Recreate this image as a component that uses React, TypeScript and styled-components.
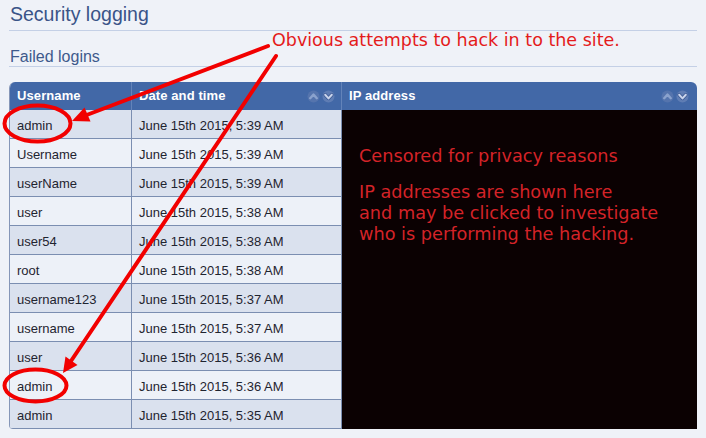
import React from "react";
import styled, { createGlobalStyle } from "styled-components";

const Global = createGlobalStyle`
  html, body { margin: 0; padding: 0; background: #eff2f8; }
  * { box-sizing: border-box; }
`;

const Page = styled.div`
  position: relative;
  width: 706px;
  height: 438px;
  overflow: hidden;
  padding: 0 9px;
  background: #eff2f8;
  font-family: "Liberation Sans", Arial, sans-serif;
`;

const Title = styled.h1`
  margin: 0;
  padding: 2px 0 4px 1px;
  font-size: 19.5px;
  line-height: 24px;
  font-weight: normal;
  color: #3a5488;
  border-bottom: 1px solid #c4d0e6;
`;

const SubTitle = styled.h2`
  margin: 16px 0 0;
  padding: 0 0 0 1px;
  font-size: 16px;
  line-height: 19px;
  font-weight: normal;
  color: #3e5a8c;
  border-bottom: 1px solid #c4d0e6;
`;

const Table = styled.div`
  margin-top: 15px;
  width: 688px;
  border-left: 1px solid #8596b8;
  border-radius: 6px 6px 0 4px;
  overflow: hidden;
`;

const HeaderRow = styled.div`
  display: grid;
  grid-template-columns: 122px 210px 1fr;
  height: 28px;
  background: #4268a7;
`;

const HeaderCell = styled.div<{ $last?: boolean }>`
  display: flex;
  align-items: center;
  justify-content: space-between;
  padding: 0 ${(p) => (p.$last ? "8px" : "6px")} 0 7px;
  border-right: ${(p) => (p.$last ? "none" : "1px solid #6383b9")};
  color: #ffffff;
  font-size: 13px;
  font-weight: bold;
  line-height: 28px;
  letter-spacing: 0.1px;
`;

const SortIcons = styled.span`
  display: flex;
  gap: 2px;
  align-items: center;
`;

const Body = styled.div`
  display: flex;
`;

const RowsColumn = styled.div`
  width: 332px;
  display: flex;
  flex-direction: column;
`;

const Row = styled.div<{ $odd: boolean }>`
  display: grid;
  grid-template-columns: 122px 210px;
  height: 29px;
  background: ${(p) => (p.$odd ? "#dae1ee" : "#edf1f8")};
  border-bottom: 1px solid #7b8eb1;
`;

const Cell = styled.div`
  padding: 3px 0 0 7px;
  line-height: 25px;
  font-size: 13px;
  color: #1f2430;
  border-right: 1px solid #7b8eb1;
  white-space: nowrap;
`;

const Censored = styled.div`
  flex: 1;
  background: #0b0102;
  padding: 36px 18px 0 17px;
  font-family: "DejaVu Sans", Verdana, sans-serif;
  font-size: 17.7px;
  line-height: 21px;
  color: #d42328;
  white-space: nowrap;
`;

const CensorPara = styled.p`
  margin: 0 0 15px;
`;

const Annotation = styled.div`
  position: absolute;
  left: 272px;
  top: 30px;
  font-family: "DejaVu Sans", Verdana, sans-serif;
  font-size: 17.5px;
  line-height: 21px;
  color: #e41b1b;
  white-space: nowrap;
  z-index: 2;
`;

const Overlay = styled.svg`
  position: absolute;
  left: 0;
  top: 0;
  pointer-events: none;
  z-index: 3;
`;

const SortUp = () => (
  <svg width="13" height="13" viewBox="0 0 13 13">
    <circle cx="6.5" cy="6.5" r="6" fill="#5574ad" />
    <path d="M3.2 8.2 L6.5 4.6 L9.8 8.2" fill="none" stroke="#8aa2cd" strokeWidth="2.4" strokeLinecap="round" strokeLinejoin="round" />
  </svg>
);

const SortDown = () => (
  <svg width="13" height="13" viewBox="0 0 13 13">
    <circle cx="6.5" cy="6.5" r="6" fill="#5f7db4" />
    <path d="M3.2 4.8 L6.5 8.4 L9.8 4.8" fill="none" stroke="#3d5a93" strokeWidth="3.6" strokeLinecap="round" strokeLinejoin="round" />
    <path d="M3.2 4.8 L6.5 8.4 L9.8 4.8" fill="none" stroke="#c9d4ec" strokeWidth="2" strokeLinecap="round" strokeLinejoin="round" />
  </svg>
);

const rows: [string, string][] = [
  ["admin", "June 15th 2015, 5:39 AM"],
  ["Username", "June 15th 2015, 5:39 AM"],
  ["userName", "June 15th 2015, 5:39 AM"],
  ["user", "June 15th 2015, 5:38 AM"],
  ["user54", "June 15th 2015, 5:38 AM"],
  ["root", "June 15th 2015, 5:38 AM"],
  ["username123", "June 15th 2015, 5:37 AM"],
  ["username", "June 15th 2015, 5:37 AM"],
  ["user", "June 15th 2015, 5:36 AM"],
  ["admin", "June 15th 2015, 5:36 AM"],
  ["admin", "June 15th 2015, 5:35 AM"],
];

export default function App() {
  return (
    <>
      <Global />
      <Page>
        <Title>Security logging</Title>
        <SubTitle>Failed logins</SubTitle>
        <Table>
          <HeaderRow>
            <HeaderCell>Username</HeaderCell>
            <HeaderCell>
              Date and time
              <SortIcons>
                <SortUp />
                <SortDown />
              </SortIcons>
            </HeaderCell>
            <HeaderCell $last>
              IP address
              <SortIcons>
                <SortUp />
                <SortDown />
              </SortIcons>
            </HeaderCell>
          </HeaderRow>
          <Body>
            <RowsColumn>
              {rows.map(([u, d], i) => (
                <Row key={i} $odd={i % 2 === 0}>
                  <Cell>{u}</Cell>
                  <Cell>{d}</Cell>
                </Row>
              ))}
            </RowsColumn>
            <Censored>
              <CensorPara>Censored for privacy reasons</CensorPara>
              <CensorPara>
                IP addresses are shown here
                <br />
                and may be clicked to investigate
                <br />
                who is performing the hacking.
              </CensorPara>
            </Censored>
          </Body>
        </Table>
        <Annotation>Obvious attempts to hack in to the site.</Annotation>
        <Overlay width="706" height="438" viewBox="0 0 706 438">
          <g stroke="#f20000" strokeWidth="4" fill="none" strokeLinecap="round">
            <line x1="268" y1="46" x2="84" y2="116" />
            <line x1="276" y1="56" x2="69" y2="364" />
            <ellipse cx="37.5" cy="123.5" rx="33" ry="18" />
            <ellipse cx="35.5" cy="385.5" rx="31" ry="16" />
          </g>
          <g fill="#f20000">
            <polygon points="72,121 90.5,121.5 84.5,107.5" />
            <polygon points="63,373 77.5,365 65.5,356.5" />
          </g>
        </Overlay>
      </Page>
    </>
  );
}
